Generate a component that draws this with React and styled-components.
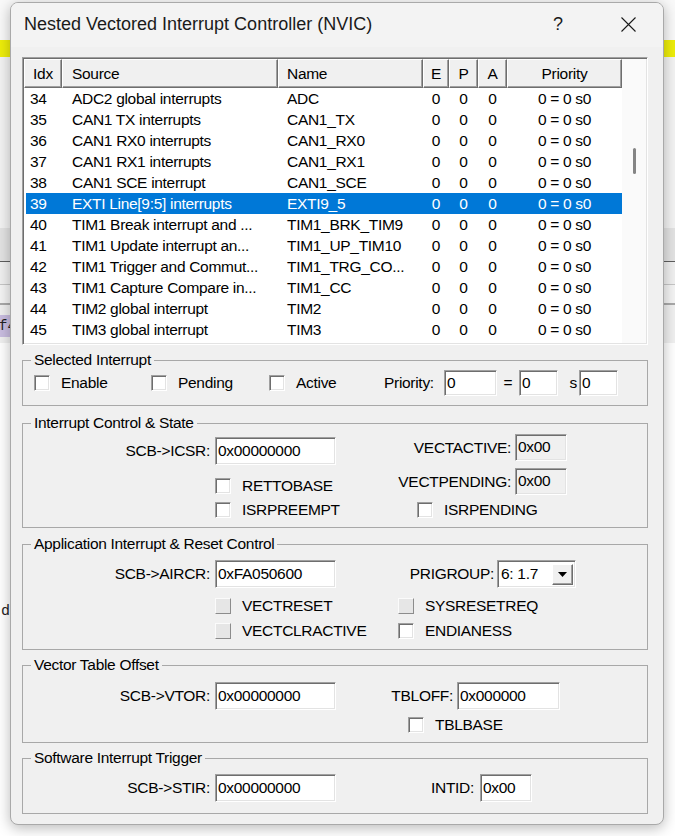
import React from 'react'
import styled, { createGlobalStyle, css } from 'styled-components'

const GlobalStyle = createGlobalStyle`
  html, body {
    margin: 0;
    padding: 0;
  }
  body {
    width: 675px;
    height: 836px;
    overflow: hidden;
    font-family: 'Liberation Sans', Arial, sans-serif;
  }
`

const interrupts = [
  { idx: 34, source: 'ADC2 global interrupts', name: 'ADC' },
  { idx: 35, source: 'CAN1 TX interrupts', name: 'CAN1_TX' },
  { idx: 36, source: 'CAN1 RX0 interrupts', name: 'CAN1_RX0' },
  { idx: 37, source: 'CAN1 RX1 interrupts', name: 'CAN1_RX1' },
  { idx: 38, source: 'CAN1 SCE interrupt', name: 'CAN1_SCE' },
  { idx: 39, source: 'EXTI Line[9:5] interrupts', name: 'EXTI9_5', selected: true },
  { idx: 40, source: 'TIM1 Break interrupt and ...', name: 'TIM1_BRK_TIM9' },
  { idx: 41, source: 'TIM1 Update interrupt an...', name: 'TIM1_UP_TIM10' },
  { idx: 42, source: 'TIM1 Trigger and Commut...', name: 'TIM1_TRG_CO...' },
  { idx: 43, source: 'TIM1 Capture Compare in...', name: 'TIM1_CC' },
  { idx: 44, source: 'TIM2 global interrupt', name: 'TIM2' },
  { idx: 45, source: 'TIM3 global interrupt', name: 'TIM3' },
]

const columns = [
  { key: 'idx', label: 'Idx', width: 38, head: 'center', align: 'left', pad: 6 },
  { key: 'source', label: 'Source', width: 216, head: 'left', align: 'left', pad: 10 },
  { key: 'name', label: 'Name', width: 145, head: 'left', align: 'left', pad: 9 },
  { key: 'e', label: 'E', width: 26, head: 'center', align: 'center', pad: 0 },
  { key: 'p', label: 'P', width: 29, head: 'center', align: 'center', pad: 0 },
  { key: 'a', label: 'A', width: 29, head: 'center', align: 'center', pad: 0 },
  { key: 'prio', label: 'Priority', width: 115, head: 'center', align: 'center', pad: 0 },
]

const sunken = css`
  box-sizing: border-box;
  border-style: solid;
  border-width: 1px;
  border-color: #a0a0a0 #ffffff #ffffff #a0a0a0;
  box-shadow: inset 1px 1px 0 #6e6e6e, inset -1px -1px 0 #e3e3e3;
`

const raised = css`
  box-sizing: border-box;
  border-style: solid;
  border-width: 1px;
  border-color: #ffffff #6e6e6e #6e6e6e #ffffff;
  box-shadow: inset -1px -1px 0 #a0a0a0;
`

const uiText = css`
  font-family: 'Liberation Sans', Arial, sans-serif;
  font-size: 15.5px;
  letter-spacing: -0.3px;
  color: #000;
`

const App = () => {
  return (
    <>
      <GlobalStyle />
      <Desktop>
        <Band h={40} bg='#f9f9f9' />
        <Band h={17} bg='#eeee0a' />
        <Band h={171} bg='#f3f3f3' />
        <Band h={33} bg='#e3e3e3' line='1px solid #5e5e5e' />
        <Band h={22} bg='#f0f0f0' line='1px solid #c6c6c6' />
        <Band h={18} bg='#f4f4f4' line='2px solid #a9a9a9' />
        <TabStrip>
          <Tab>f4</Tab>
        </TabStrip>
        <Editor>
          <CodeLine>d</CodeLine>
        </Editor>

        <Window>
          <TitleBar>
            <Title>Nested Vectored Interrupt Controller (NVIC)</Title>
            <CaptionButton>?</CaptionButton>
            <CaptionButton>
              <svg width='15' height='15' viewBox='0 0 15 15'>
                <path d='M0.5 0.5 L14.5 14.5 M14.5 0.5 L0.5 14.5' stroke='#1a1a1a' strokeWidth='1.1' fill='none' />
              </svg>
            </CaptionButton>
          </TitleBar>

          <Body>
            <ListBox>
              <Table>
                <HeaderRow>
                  {columns.map((c) => (
                    <HeaderCell key={c.key} w={c.width} align={c.head} pad={c.pad}>
                      {c.label}
                    </HeaderCell>
                  ))}
                </HeaderRow>
                {interrupts.map((r) => {
                  const values = {
                    idx: r.idx,
                    source: r.source,
                    name: r.name,
                    e: 0,
                    p: 0,
                    a: 0,
                    prio: '0 = 0 s0',
                  }
                  return (
                    <Row key={r.idx} selected={r.selected}>
                      {columns.map((c) => (
                        <Cell key={c.key} w={c.width} align={c.align} pad={c.pad}>
                          {values[c.key]}
                        </Cell>
                      ))}
                    </Row>
                  )
                })}
              </Table>
              <ScrollTrack>
                <ScrollThumb />
              </ScrollTrack>
            </ListBox>

            <Group mt={6} pt={1} pb={9}>
              <Legend>Selected Interrupt</Legend>
              <FlowRow indent={11} h={26}>
                <CheckItem w={117}>
                  <CheckBox />
                  <span>Enable</span>
                </CheckItem>
                <CheckItem w={118}>
                  <CheckBox />
                  <span>Pending</span>
                </CheckItem>
                <CheckItem w={115}>
                  <CheckBox />
                  <span>Active</span>
                </CheckItem>
                <FieldLabel w={56} align='left' gap={4}>Priority:</FieldLabel>
                <TextBox w={53} h={26}>0</TextBox>
                <FieldLabel w={22} align='center' gap={0}>=</FieldLabel>
                <TextBox w={39} h={26}>0</TextBox>
                <FieldLabel w={21} align='right' gap={0}>s</FieldLabel>
                <TextBox w={39} h={26}>0</TextBox>
              </FlowRow>
            </Group>

            <Group mt={8} pt={2} pb={8}>
              <Legend>Interrupt Control &amp; State</Legend>
              <Columns>
                <Stack w={313} top={3}>
                  <FlowRow h={28}>
                    <FieldLabel w={187} gap={5}>SCB-&gt;ICSR:</FieldLabel>
                    <TextBox w={121} h={28}>0x00000000</TextBox>
                  </FlowRow>
                  <FlowRow indent={192} h={18} mt={12}>
                    <CheckItem>
                      <CheckBox />
                      <span>RETTOBASE</span>
                    </CheckItem>
                  </FlowRow>
                  <FlowRow indent={192} h={18} mt={6}>
                    <CheckItem>
                      <CheckBox />
                      <span>ISRPREEMPT</span>
                    </CheckItem>
                  </FlowRow>
                </Stack>
                <Stack>
                  <FlowRow h={27}>
                    <FieldLabel w={175} gap={4}>VECTACTIVE:</FieldLabel>
                    <TextBox w={52} h={27} readOnly>0x00</TextBox>
                  </FlowRow>
                  <FlowRow h={27} mt={7}>
                    <FieldLabel w={175} gap={4}>VECTPENDING:</FieldLabel>
                    <TextBox w={52} h={27} readOnly>0x00</TextBox>
                  </FlowRow>
                  <FlowRow indent={81} h={18} mt={6}>
                    <CheckItem>
                      <CheckBox />
                      <span>ISRPENDING</span>
                    </CheckItem>
                  </FlowRow>
                </Stack>
              </Columns>
            </Group>

            <Group mt={7} pt={7} pb={9}>
              <Legend>Application Interrupt &amp; Reset Control</Legend>
              <FlowRow h={28}>
                <FieldLabel w={187} gap={5}>SCB-&gt;AIRCR:</FieldLabel>
                <TextBox w={121} h={28}>0xFA050600</TextBox>
                <FieldLabel w={158} gap={3}>PRIGROUP:</FieldLabel>
                <Combo>
                  <span>6: 1.7</span>
                  <ComboButton>
                    <svg width='9' height='5' viewBox='0 0 9 5'>
                      <path d='M0 0 H9 L4.5 5 Z' fill='#000' />
                    </svg>
                  </ComboButton>
                </Combo>
              </FlowRow>
              <FlowRow indent={192} h={18} mt={9}>
                <CheckItem w={183}>
                  <CheckBox disabled />
                  <span>VECTRESET</span>
                </CheckItem>
                <CheckItem>
                  <CheckBox disabled />
                  <span>SYSRESETREQ</span>
                </CheckItem>
              </FlowRow>
              <FlowRow indent={192} h={18} mt={7}>
                <CheckItem w={183}>
                  <CheckBox disabled />
                  <span>VECTCLRACTIVE</span>
                </CheckItem>
                <CheckItem>
                  <CheckBox />
                  <span>ENDIANESS</span>
                </CheckItem>
              </FlowRow>
            </Group>

            <Group mt={6} pt={8} pb={8}>
              <Legend>Vector Table Offset</Legend>
              <FlowRow h={28}>
                <FieldLabel w={187} gap={5}>SCB-&gt;VTOR:</FieldLabel>
                <TextBox w={121} h={28}>0x00000000</TextBox>
                <FieldLabel w={117} gap={4}>TBLOFF:</FieldLabel>
                <TextBox w={103} h={28}>0x000000</TextBox>
              </FlowRow>
              <FlowRow indent={385} h={18} mt={6}>
                <CheckItem>
                  <CheckBox />
                  <span>TBLBASE</span>
                </CheckItem>
              </FlowRow>
            </Group>

            <Group mt={6} pt={7} pb={11}>
              <Legend>Software Interrupt Trigger</Legend>
              <FlowRow h={28}>
                <FieldLabel w={187} gap={5}>SCB-&gt;STIR:</FieldLabel>
                <TextBox w={121} h={28}>0x00000000</TextBox>
                <FieldLabel w={138} gap={6}>INTID:</FieldLabel>
                <TextBox w={52} h={28}>0x00</TextBox>
              </FlowRow>
            </Group>
          </Body>
        </Window>
      </Desktop>
    </>
  )
}

const Desktop = styled.div`
  position: relative;
  width: 675px;
  height: 836px;
  overflow: hidden;
  background: #ffffff;
  display: flex;
  flex-direction: column;
`

const Band = styled.div`
  flex-shrink: 0;
  height: ${(p) => p.h}px;
  background: ${(p) => p.bg};
  border-bottom: ${(p) => p.line || 'none'};
`

const TabStrip = styled.div`
  flex-shrink: 0;
  height: 38px;
  background: #f0f0f0;
  display: flex;
  align-items: center;
  padding-top: 4px;
  box-sizing: border-box;
`

const Tab = styled.div`
  margin-left: -7px;
  height: 22px;
  padding: 0 6px;
  background: #c9bde0;
  font-family: 'Liberation Mono', monospace;
  font-size: 14px;
  line-height: 22px;
  color: #222;
`

const Editor = styled.div`
  flex: 1;
  background: #ffffff;
  padding-top: 260px;
`

const CodeLine = styled.div`
  font-family: 'Liberation Mono', monospace;
  font-size: 15px;
  line-height: 18px;
  padding-left: 1px;
  color: #222;
`

const Window = styled.div`
  position: absolute;
  left: 10px;
  top: 2px;
  width: 654px;
  height: 823px;
  box-sizing: border-box;
  border: 1px solid #a9a9a9;
  border-radius: 8px;
  overflow: hidden;
  background: #f0f0f0;
  box-shadow: 0 3px 14px rgba(0, 0, 0, 0.28);
  display: flex;
  flex-direction: column;
`

const TitleBar = styled.div`
  height: 44px;
  flex-shrink: 0;
  background: #f3f3f3;
  display: flex;
  align-items: center;
  padding-left: 13px;
`

const Title = styled.div`
  flex: 1;
  font-family: 'Liberation Sans', Arial, sans-serif;
  font-size: 18px;
  color: #1a1a1a;
  padding-bottom: 2px;
`

const CaptionButton = styled.div`
  width: 70px;
  height: 44px;
  display: flex;
  align-items: center;
  justify-content: center;
  font-family: 'Liberation Sans', Arial, sans-serif;
  font-size: 18px;
  color: #1a1a1a;
  padding-bottom: 2px;
  box-sizing: border-box;
`

const Body = styled.div`
  padding: 10px 15px 0 11px;
  display: flex;
  flex-direction: column;
`

const ListBox = styled.div`
  ${sunken};
  height: 288px;
  padding: 1px;
  background: #ffffff;
  display: flex;
`

const Table = styled.div`
  width: 598px;
  display: flex;
  flex-direction: column;
`

const HeaderRow = styled.div`
  display: flex;
  height: 29px;
  flex-shrink: 0;
`

const HeaderCell = styled.div`
  ${raised};
  ${uiText};
  width: ${(p) => p.w}px;
  flex-shrink: 0;
  background: #f0f0f0;
  display: flex;
  align-items: center;
  justify-content: ${(p) => (p.align === 'center' ? 'center' : 'flex-start')};
  padding-left: ${(p) => (p.align === 'center' ? 0 : p.pad - 1)}px;
`

const Row = styled.div`
  display: flex;
  height: 21px;
  flex-shrink: 0;
  background: ${(p) => (p.selected ? '#0078d7' : 'transparent')};
  margin-left: 2px;
  & > div {
    color: ${(p) => (p.selected ? '#ffffff' : '#000000')};
  }
  & > div:first-child {
    width: 36px;
    padding-left: 4px;
  }
`

const Cell = styled.div`
  ${uiText};
  width: ${(p) => p.w}px;
  flex-shrink: 0;
  box-sizing: border-box;
  line-height: 21px;
  white-space: nowrap;
  overflow: hidden;
  text-align: ${(p) => p.align};
  padding-left: ${(p) => p.pad}px;
`

const ScrollTrack = styled.div`
  flex: 1;
  background: #fafafa;
  display: flex;
  flex-direction: column;
  align-items: center;
  padding-left: 1px;
`

const ScrollThumb = styled.div`
  margin-top: 89px;
  width: 3px;
  height: 26px;
  border-radius: 2px;
  background: #858585;
`

const Group = styled.fieldset`
  margin: ${(p) => p.mt}px 0 0;
  padding: ${(p) => p.pt}px 0 ${(p) => p.pb}px;
  border: 1px solid #a8a8a8;
  min-width: 0;
`

const Legend = styled.legend`
  ${uiText};
  margin-left: 8px;
  padding: 0 3px;
  line-height: 18px;
`

const Columns = styled.div`
  display: flex;
  align-items: flex-start;
`

const Stack = styled.div`
  display: flex;
  flex-direction: column;
  width: ${(p) => (p.w ? `${p.w}px` : 'auto')};
  margin-top: ${(p) => p.top || 0}px;
`

const FlowRow = styled.div`
  display: flex;
  align-items: center;
  height: ${(p) => p.h}px;
  margin-top: ${(p) => p.mt || 0}px;
  padding-left: ${(p) => p.indent || 0}px;
`

const FieldLabel = styled.span`
  ${uiText};
  width: ${(p) => p.w}px;
  flex-shrink: 0;
  box-sizing: border-box;
  text-align: ${(p) => p.align || 'right'};
  margin-right: ${(p) => p.gap}px;
  white-space: nowrap;
  ${(p) => p.align === 'right' && p.gap === 0 && 'padding-right: 2px;'}
`

const TextBox = styled.div`
  ${sunken};
  ${uiText};
  width: ${(p) => p.w}px;
  height: ${(p) => p.h}px;
  flex-shrink: 0;
  background: ${(p) => (p.readOnly ? '#f0f0f0' : '#ffffff')};
  display: flex;
  align-items: center;
  padding: 0 2px 1px 2px;
  white-space: nowrap;
  overflow: hidden;
`

const CheckItem = styled.div`
  ${uiText};
  width: ${(p) => (p.w ? `${p.w}px` : 'auto')};
  flex-shrink: 0;
  display: flex;
  align-items: center;
  gap: 11px;
  white-space: nowrap;
`

const CheckBox = styled.span`
  width: 16px;
  height: 16px;
  flex-shrink: 0;
  box-sizing: border-box;
  ${(p) =>
    p.disabled
      ? css`
          background: #e6e6e6;
          border: 1px solid;
          border-color: #fbfbfb #8c8c8c #8c8c8c #fbfbfb;
        `
      : css`
          background: #ffffff;
          ${sunken};
        `}
`

const Combo = styled.div`
  ${sunken};
  ${uiText};
  width: 79px;
  height: 28px;
  flex-shrink: 0;
  background: #ffffff;
  display: flex;
  align-items: center;
  justify-content: space-between;
  padding: 0 2px 0 3px;
`

const ComboButton = styled.div`
  ${raised};
  width: 21px;
  height: 21px;
  background: #f0f0f0;
  display: flex;
  align-items: center;
  justify-content: center;
`

export default App
